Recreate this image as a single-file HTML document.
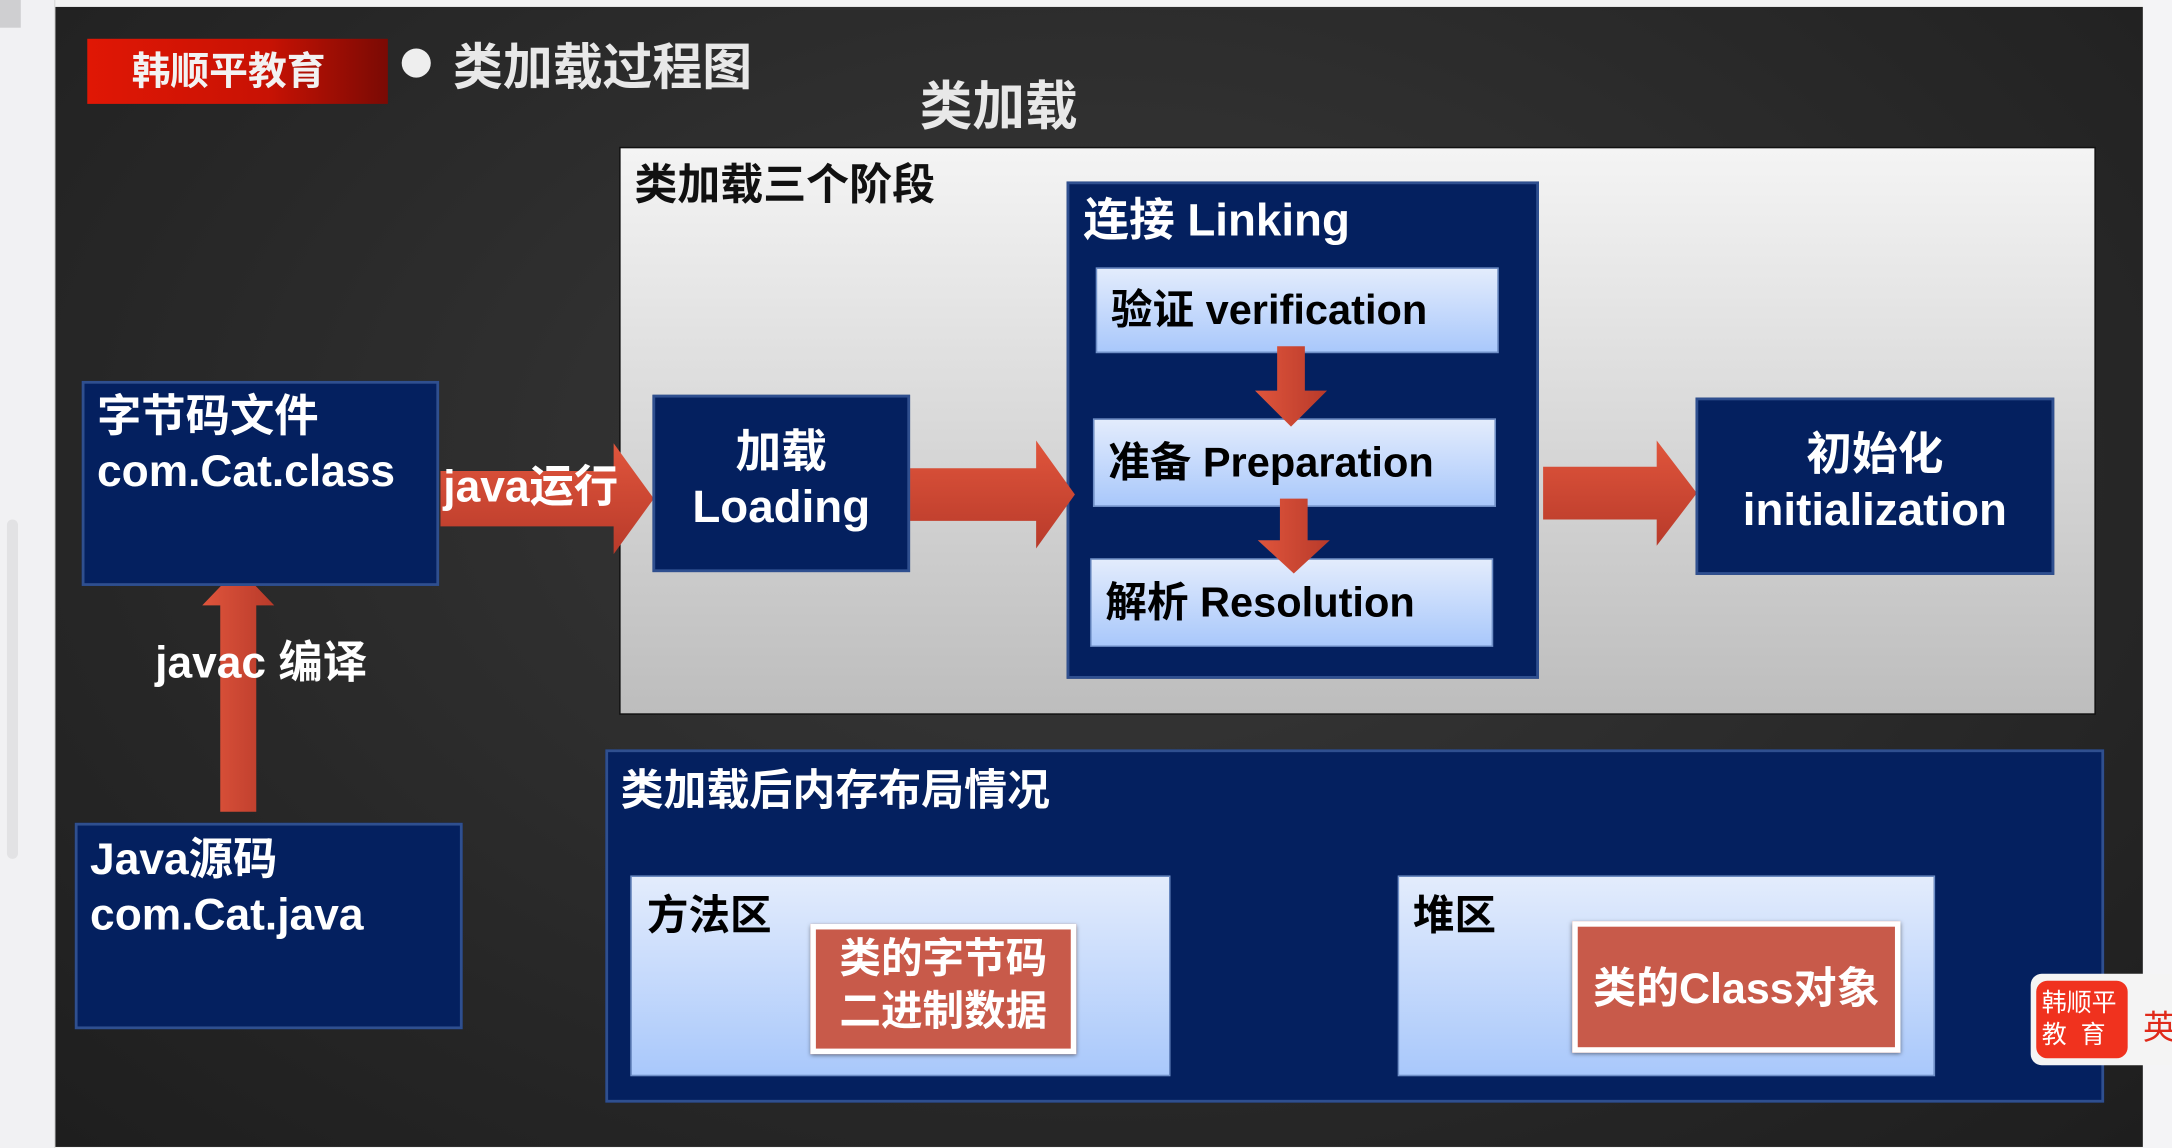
<!DOCTYPE html>
<html><head><meta charset="utf-8">
<style>
html,body{margin:0;padding:0;width:2172px;height:1148px;overflow:hidden;background:#f3f3f3;}
#w{position:absolute;left:0;top:0;width:1568px;height:829px;transform:scale(1.3852);transform-origin:0 0;
font-family:"Liberation Sans","Noto Sans CJK SC",sans-serif;font-weight:bold;}
.a{position:absolute;box-sizing:border-box;}
.navy{background:#04205f;border:2px solid #2f4f8f;color:#fff;}
.lt{background:linear-gradient(#e3ecfc,#a9c8fb);border:1px solid #6f8fc7;color:#111;}
.red{background:#c85a4a;border:4px solid #fff;box-shadow:0 1px 3px rgba(0,0,0,.5);color:#fff;}
.t{position:absolute;white-space:nowrap;}
</style></head><body>
<div id="w">
<div class="a" style="left:0;top:0;width:40px;height:829px;background:#f1f1f3;border-right:1px solid #ddd"></div>
<div class="a" style="left:5px;top:375px;width:8px;height:245px;background:#e2e2e4;border-radius:4px"></div>
<div class="a" style="left:0;top:0;width:15px;height:20px;background:#cfcfd1"></div>
<div class="a" style="left:40px;top:5px;width:1507px;height:823px;background:radial-gradient(ellipse at 50% 40%,#3a3a3a,#262626 70%,#1e1e1e)"></div>
<div class="a" style="left:63px;top:28px;width:217px;height:47px;background:linear-gradient(90deg,#e01705,#c81204 60%,#7a0a04)"></div>
<div class="t" style="left:95px;top:30px;font-size:28px;color:#f2f2f2">韩顺平教育</div>
<div class="a" style="left:290px;top:35px;width:21px;height:21px;border-radius:50%;background:#eee"></div>
<div class="t" style="left:327px;top:20px;font-size:36px;color:#e8e8e8">类加载过程图</div>
<div class="t" style="left:664px;top:46px;font-size:38px;color:#e8e8e8">类加载</div>

<div class="a" style="left:447px;top:106px;width:1066px;height:410px;background:linear-gradient(#f4f4f4,#bdbdbd);border:1px solid #111"></div>
<div class="t" style="left:458px;top:108px;font-size:31px;color:#111">类加载三个阶段</div>

<div class="a navy" style="left:770px;top:131px;width:341px;height:359px"></div>
<div class="t" style="left:782px;top:132px;font-size:33px;color:#fff">连接 Linking</div>
<div class="a lt" style="left:791px;top:193px;width:291px;height:62px"></div>
<div class="t" style="left:802px;top:199px;font-size:30px">验证 verification</div>
<div class="a lt" style="left:789px;top:302px;width:291px;height:64px"></div>
<div class="t" style="left:800px;top:309px;font-size:30px">准备 Preparation</div>
<div class="a lt" style="left:787px;top:403px;width:291px;height:64px"></div>
<div class="t" style="left:798px;top:410px;font-size:30px">解析 Resolution</div>

<svg class="a" style="left:0;top:0" width="1568" height="829">
<defs><linearGradient id="g" x1="0" x2="0" y1="0" y2="1"><stop offset="0" stop-color="#e0553c"/><stop offset="1" stop-color="#b83a2a"/></linearGradient>
<linearGradient id="gv" x1="0" x2="1" y1="0" y2="0"><stop offset="0" stop-color="#e0553c"/><stop offset="1" stop-color="#b83a2a"/></linearGradient></defs>
<polygon points="922,250 942,250 942,282 958,282 932,308 906,282 922,282" fill="url(#gv)"/>
<polygon points="924,360 944,360 944,390 960,390 934,414 908,390 924,390" fill="url(#gv)"/>
<polygon points="318,340 443,340 443,320 472,360 443,400 443,380 318,380" fill="url(#g)"/>
<polygon points="657,338 748,338 748,318 776,357 748,396 748,376 657,376" fill="url(#g)"/>
<polygon points="1114,337 1196,337 1196,318 1225,356 1196,394 1196,375 1114,375" fill="url(#g)"/>
<polygon points="159,586 185,586 185,437 198,437 172,410 146,437 159,437" fill="url(#gv)"/>
<line x1="777" y1="715" x2="1128" y2="715" stroke="#c85a4a" stroke-width="4"/>
<polyline points="1118,704 1134,715 1118,726" fill="none" stroke="#c85a4a" stroke-width="4"/>
</svg>

<div class="a navy" style="left:471px;top:285px;width:186px;height:128px"></div>
<div class="t" style="left:471px;top:306px;width:186px;text-align:center;font-size:33px;color:#fff;line-height:40px">加载<br>Loading</div>
<div class="a navy" style="left:1224px;top:287px;width:259px;height:128px"></div>
<div class="t" style="left:1224px;top:308px;width:259px;text-align:center;font-size:33px;color:#fff;line-height:40px">初始化<br>initialization</div>

<div class="a navy" style="left:59px;top:275px;width:258px;height:148px"></div>
<div class="t" style="left:70px;top:280px;font-size:32px;color:#fff;line-height:40px">字节码文件<br>com.Cat.class</div>
<div class="t" style="left:320px;top:326px;font-size:32px;color:#fff">java运行</div>
<div class="t" style="left:112px;top:453px;font-size:32px;color:#fff">javac 编译</div>
<div class="a navy" style="left:54px;top:594px;width:280px;height:149px"></div>
<div class="t" style="left:65px;top:600px;font-size:32px;color:#fff;line-height:40px">Java源码<br>com.Cat.java</div>

<div class="a navy" style="left:437px;top:541px;width:1082px;height:255px"></div>
<div class="t" style="left:448px;top:545px;font-size:31px;color:#fff">类加载后内存布局情况</div>
<div class="a lt" style="left:455px;top:632px;width:390px;height:145px"></div>
<div class="t" style="left:467px;top:636px;font-size:30px">方法区</div>
<div class="a lt" style="left:1009px;top:632px;width:388px;height:145px"></div>
<div class="t" style="left:1020px;top:636px;font-size:30px">堆区</div>
<div class="a red" style="left:585px;top:667px;width:192px;height:94px"></div>
<div class="t" style="left:585px;top:674px;width:192px;text-align:center;font-size:30px;color:#fff;line-height:38px">类的字节码<br>二进制数据</div>
<div class="a red" style="left:1135px;top:665px;width:237px;height:95px"></div>
<div class="t" style="left:1135px;top:688px;width:237px;text-align:center;font-size:31px;color:#fff">类的Class对象</div>

<div class="a" style="left:1547px;top:0;width:21px;height:829px;background:#f4f4f6"></div>
<div class="a" style="left:1466px;top:703px;width:102px;height:66px;background:#f4f4f4;border-radius:8px 0 0 8px"></div>
<div class="a" style="left:1470px;top:708px;width:66px;height:56px;background:#f0321e;border-radius:8px"></div>
<div class="t" style="left:1474px;top:713px;font-size:18px;color:#fff;line-height:23px;font-weight:normal">韩顺平<br>教&nbsp;&nbsp;育</div>
<div class="t" style="left:1547px;top:722px;font-size:24px;color:#e02a1a;font-weight:normal">英</div>
</div>
</body></html>
